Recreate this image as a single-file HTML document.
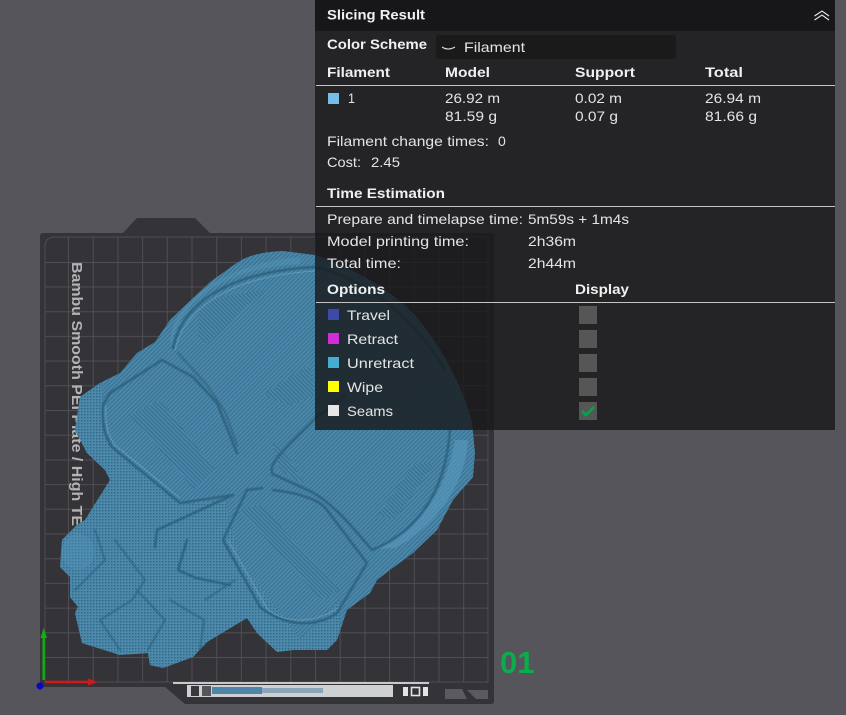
<!DOCTYPE html>
<html><head><meta charset="utf-8"><style>
html,body{margin:0;padding:0;background:#56555c;width:846px;height:715px;overflow:hidden}
svg{display:block}
text{font-family:"Liberation Sans",sans-serif;font-size:14px;fill:#e4e4e4}
.b{font-weight:bold;fill:#f0f0f0}
</style></head><body>
<svg width="846" height="715" viewBox="0 0 846 715" xmlns="http://www.w3.org/2000/svg">
<defs>
<pattern id="st" width="3" height="3" patternUnits="userSpaceOnUse" patternTransform="rotate(-45)">
<rect width="3" height="3" fill="#4b88aa"/><rect y="0" width="3" height="1" fill="#386f90"/>
</pattern>
<pattern id="dk" width="3" height="3" patternUnits="userSpaceOnUse" patternTransform="rotate(45)">
<rect width="3" height="3" fill="#4a86a8"/><rect y="0" width="3" height="1" fill="#346b8c"/>
</pattern>
<pattern id="mt" width="3" height="3" patternUnits="userSpaceOnUse">
<rect width="3" height="3" fill="#4c89ab"/><rect width="1.4" height="1.4" fill="#2f6686"/>
</pattern>
<filter id="soft" x="-5%" y="-5%" width="110%" height="110%"><feGaussianBlur stdDeviation=".6"/></filter>
<clipPath id="sk"><path d="M283,251 C262,252 250,255 238,262 L210,282 L170,320 L155,342 L137,353 L120,373 L100,383 L80,397 L75,430 L87,453 L105,470 L110,480 L85,520 L77,525 L62,540 L60,567 L70,577 L70,597 L78,607 L75,613 L82,643 L120,655 L148,653 L150,665 L163,668 L193,657 L207,642 L247,618 L257,633 L277,652 L293,650 L327,650 L337,640 L347,610 L370,593 L377,580 L390,570 L413,553 L437,530 L453,500 L473,477 L475,453 L472,422 C465,395 448,355 415,315 C395,295 365,272 315,255 Z"/></clipPath>
</defs>

<rect width="846" height="715" fill="#56555c"/>

<!-- plate -->
<path d="M43,233 L123,233 L137,218 L195,218 L210,233 L491,233 Q494,233 494,236 L494,701 Q494,704 491,704 L185,704 L165,687 L43,687 Q40,687 40,684 L40,236 Q40,233 43,233 Z" fill="#343338"/>
<g stroke="#4f4e54" stroke-width="1" fill="none">
<path d="M45,682 L45,246 Q45,237 56,237 L488,237 L488,682 Z"/>
<path d="M68.5,237V682M93.2,237V682M117.9,237V682M142.6,237V682M167.3,237V682M192,237V682M216.7,237V682M241.4,237V682M266.1,237V682M290.8,237V682M315.5,237V682M340.2,237V682M364.9,237V682M389.6,237V682M414.3,237V682M439,237V682M463.7,237V682"/>
<path d="M45,262.5H488M45,287H488M45,311.7H488M45,336.4H488M45,361H488M45,385.8H488M45,410.5H488M45,435.2H488M45,460H488M45,484.6H488M45,509.3H488M45,534H488M45,558.7H488M45,583.4H488M45,608.1H488M45,632.8H488M45,657.5H488"/>
</g>
<text transform="translate(72,262) rotate(90)" style="font-size:15px;font-weight:bold;fill:#b4b4b4" textLength="264" lengthAdjust="spacingAndGlyphs">Bambu Smooth PEI Plate / High TE</text>

<!-- bottom label -->
<rect x="173" y="682" width="256" height="2" fill="#c9c9cb"/>
<rect x="187" y="685" width="206" height="12" fill="#cfd0d2"/>
<rect x="191" y="686" width="8" height="10" fill="#3a3a3e"/>
<rect x="202" y="686" width="9" height="10" fill="#55555a"/>
<rect x="212" y="687" width="50" height="7" fill="#4f86a8"/>
<rect x="262" y="688" width="61" height="5" fill="#8aa6b8"/>
<rect x="403" y="687" width="5" height="9" fill="#e4e4e4"/>
<rect x="411.5" y="687.5" width="8" height="8" fill="none" stroke="#e4e4e4" stroke-width="1.6"/>
<rect x="423" y="687" width="5" height="9" fill="#e4e4e4"/>
<path d="M445,689H462L467,699H445Z" fill="#5b5a60"/>
<path d="M467,690H488V699H476Z" fill="#5b5a60"/>

<!-- model -->
<g clip-path="url(#sk)">
<rect x="40" y="230" width="460" height="450" fill="url(#st)"/>
<!-- mottled lower-left -->
<path d="M50,380 L100,380 L110,440 L180,505 L225,500 L240,560 L300,640 L340,600 L340,680 L50,680 Z" fill="url(#mt)"/>
<!-- hatch patches -->
<g fill="url(#dk)">
<path d="M200,300 L265,290 L205,345 L198,335 Z"/>
<path d="M262,395 L310,365 L315,395 L290,405 Z"/>
<path d="M413,465 L435,462 L395,520 L378,515 Z"/>
<path d="M130,415 L160,400 L215,470 L195,490 Z"/>
<path d="M240,510 L260,505 L340,590 L322,600 Z"/>
<path d="M272,440 L290,460 L305,485 L280,470 Z"/>
</g>
<!-- lighter crescents -->
<g fill="#5a9abd" opacity=".6">
<path d="M375,549 C410,535 445,500 455,440 L468,440 C465,490 430,530 395,548 Z"/>
<path d="M172,345 C180,300 225,268 300,264 L300,257 C235,262 175,295 170,340 Z" opacity=".6"/>
</g>
<!-- recess lines -->
<g fill="none" stroke="#2f6480" stroke-width="2.4" stroke-linejoin="round" stroke-linecap="round" filter="url(#soft)">
<path d="M173,348 C182,305 225,272 315,267 C370,280 415,320 445,370"/>
<path d="M162,360 L110,393 L103,405 C102,425 104,435 112,447 L180,503 L233,495 L157,530 L155,547"/>
<path d="M162,360 L193,377 L217,403 L237,453"/>
<path d="M178,353 L207,385 L225,412 L237,445" opacity=".6"/>
<path d="M223,540 L247,490 L262,488 M273,490 C300,493 320,500 327,510 L367,563 L337,613 C320,625 290,630 260,607 L223,540"/>
<path d="M273,475 C268,465 275,458 317,417 L345,395"/>
<path d="M275,475 L312,492 C335,505 355,530 372,550 C410,535 445,500 450,430"/>
<path d="M187,540 L178,570 L196,578 L230,585"/>
<path d="M95,530 L105,560 L75,590 M115,540 L145,580 L132,600 L100,620 M137,590 L165,620 L148,650 M170,600 L204,620 L200,650 M205,600 L235,580 M100,620 L120,650" stroke-width="1.8" opacity=".8"/>
</g>
<g fill="none" stroke="#83b6d2" stroke-width="1" opacity=".45">
<path d="M175,350 C184,310 228,276 315,271"/>
<path d="M106,406 C105,425 107,433 115,445 L180,498"/>
<path d="M228,540 L268,610 C290,626 318,621 338,608"/>
</g>
<ellipse cx="78" cy="552" rx="16" ry="18" fill="#5594b8" opacity=".4"/>
</g>

<!-- axes -->
<path d="M43.7,680V634" stroke="#10b010" stroke-width="2.4"/>
<path d="M43.7,628L47,638H40.4Z" fill="#10b010"/>
<path d="M45,682H90" stroke="#d01818" stroke-width="2.4"/>
<path d="M98,682L88,685.5V678.5Z" fill="#d01818"/>
<circle cx="40" cy="686" r="3.5" fill="#0808c0"/>
<text x="500" y="673" style="font-size:31px;font-weight:bold;fill:#0aad4a">01</text>

<!-- panel -->
<rect x="315" y="0" width="520" height="430" fill="#181819" fill-opacity=".8"/>
<rect x="315" y="0" width="520" height="31" fill="#0c0c0d" fill-opacity=".5"/>
<text class="b" x="327" y="19.5" textLength="98" lengthAdjust="spacingAndGlyphs">Slicing Result</text>
<path d="M814.5,16 L822,11 L829,16 M814.5,20 L822,15 L829,20" stroke="#e8e8e8" stroke-width="1.1" fill="none"/>

<text class="b" x="327" y="49" textLength="100" lengthAdjust="spacingAndGlyphs">Color Scheme</text>
<rect x="436" y="35" width="240" height="24" rx="3" fill="#1a1a1b"/>
<path d="M442,47 Q448,51 455,47" stroke="#e0e0e0" stroke-width="1.1" fill="none"/>
<text x="464" y="52" textLength="61" lengthAdjust="spacingAndGlyphs">Filament</text>

<text class="b" x="327" y="77" textLength="63" lengthAdjust="spacingAndGlyphs">Filament</text>
<text class="b" x="445" y="77" textLength="45" lengthAdjust="spacingAndGlyphs">Model</text>
<text class="b" x="575" y="77" textLength="60" lengthAdjust="spacingAndGlyphs">Support</text>
<text class="b" x="705" y="77" textLength="38" lengthAdjust="spacingAndGlyphs">Total</text>
<rect x="316" y="85" width="519" height="1" fill="#c4c4c4"/>

<rect x="328" y="93" width="11" height="11" fill="#74bde8"/>
<text x="348" y="103" textLength="7" lengthAdjust="spacingAndGlyphs">1</text>
<text x="445" y="103" textLength="55" lengthAdjust="spacingAndGlyphs">26.92 m</text>
<text x="445" y="121" textLength="52" lengthAdjust="spacingAndGlyphs">81.59 g</text>
<text x="575" y="103" textLength="47" lengthAdjust="spacingAndGlyphs">0.02 m</text>
<text x="575" y="121" textLength="43" lengthAdjust="spacingAndGlyphs">0.07 g</text>
<text x="705" y="103" textLength="56" lengthAdjust="spacingAndGlyphs">26.94 m</text>
<text x="705" y="121" textLength="52" lengthAdjust="spacingAndGlyphs">81.66 g</text>

<text x="327" y="146" textLength="162" lengthAdjust="spacingAndGlyphs">Filament change times:</text>
<text x="498" y="146">0</text>
<text x="327" y="167" textLength="34" lengthAdjust="spacingAndGlyphs">Cost:</text>
<text x="371" y="167" textLength="29" lengthAdjust="spacingAndGlyphs">2.45</text>

<text class="b" x="327" y="198" textLength="118" lengthAdjust="spacingAndGlyphs">Time Estimation</text>
<rect x="316" y="206" width="519" height="1" fill="#c4c4c4"/>

<text x="327" y="224" textLength="196" lengthAdjust="spacingAndGlyphs">Prepare and timelapse time:</text>
<text x="528" y="224" textLength="101" lengthAdjust="spacingAndGlyphs">5m59s + 1m4s</text>
<text x="327" y="246" textLength="142" lengthAdjust="spacingAndGlyphs">Model printing time:</text>
<text x="528" y="246" textLength="48" lengthAdjust="spacingAndGlyphs">2h36m</text>
<text x="327" y="268" textLength="74" lengthAdjust="spacingAndGlyphs">Total time:</text>
<text x="528" y="268" textLength="48" lengthAdjust="spacingAndGlyphs">2h44m</text>

<text class="b" x="327" y="294" textLength="58" lengthAdjust="spacingAndGlyphs">Options</text>
<text class="b" x="575" y="294" textLength="54" lengthAdjust="spacingAndGlyphs">Display</text>
<rect x="316" y="302" width="519" height="1" fill="#c4c4c4"/>

<rect x="328" y="309" width="11" height="11" fill="#3c4aa8"/>
<text x="347" y="320" textLength="43" lengthAdjust="spacingAndGlyphs">Travel</text>
<rect x="328" y="333" width="11" height="11" fill="#d22bd8"/>
<text x="347" y="344" textLength="51" lengthAdjust="spacingAndGlyphs">Retract</text>
<rect x="328" y="357" width="11" height="11" fill="#43aed2"/>
<text x="347" y="368" textLength="67" lengthAdjust="spacingAndGlyphs">Unretract</text>
<rect x="328" y="381" width="11" height="11" fill="#ffff00"/>
<text x="347" y="392" textLength="36" lengthAdjust="spacingAndGlyphs">Wipe</text>
<rect x="328" y="405" width="11" height="11" fill="#e6e6e8"/>
<text x="347" y="416" textLength="46" lengthAdjust="spacingAndGlyphs">Seams</text>

<g fill="#565656">
<rect x="579" y="306" width="18" height="18"/>
<rect x="579" y="330" width="18" height="18"/>
<rect x="579" y="354" width="18" height="18"/>
<rect x="579" y="378" width="18" height="18"/>
<rect x="579" y="402" width="18" height="18"/>
</g>
<path d="M582,411 L586,415 L594,407" stroke="#08a04a" stroke-width="3" fill="none"/>
</svg>
</body></html>
